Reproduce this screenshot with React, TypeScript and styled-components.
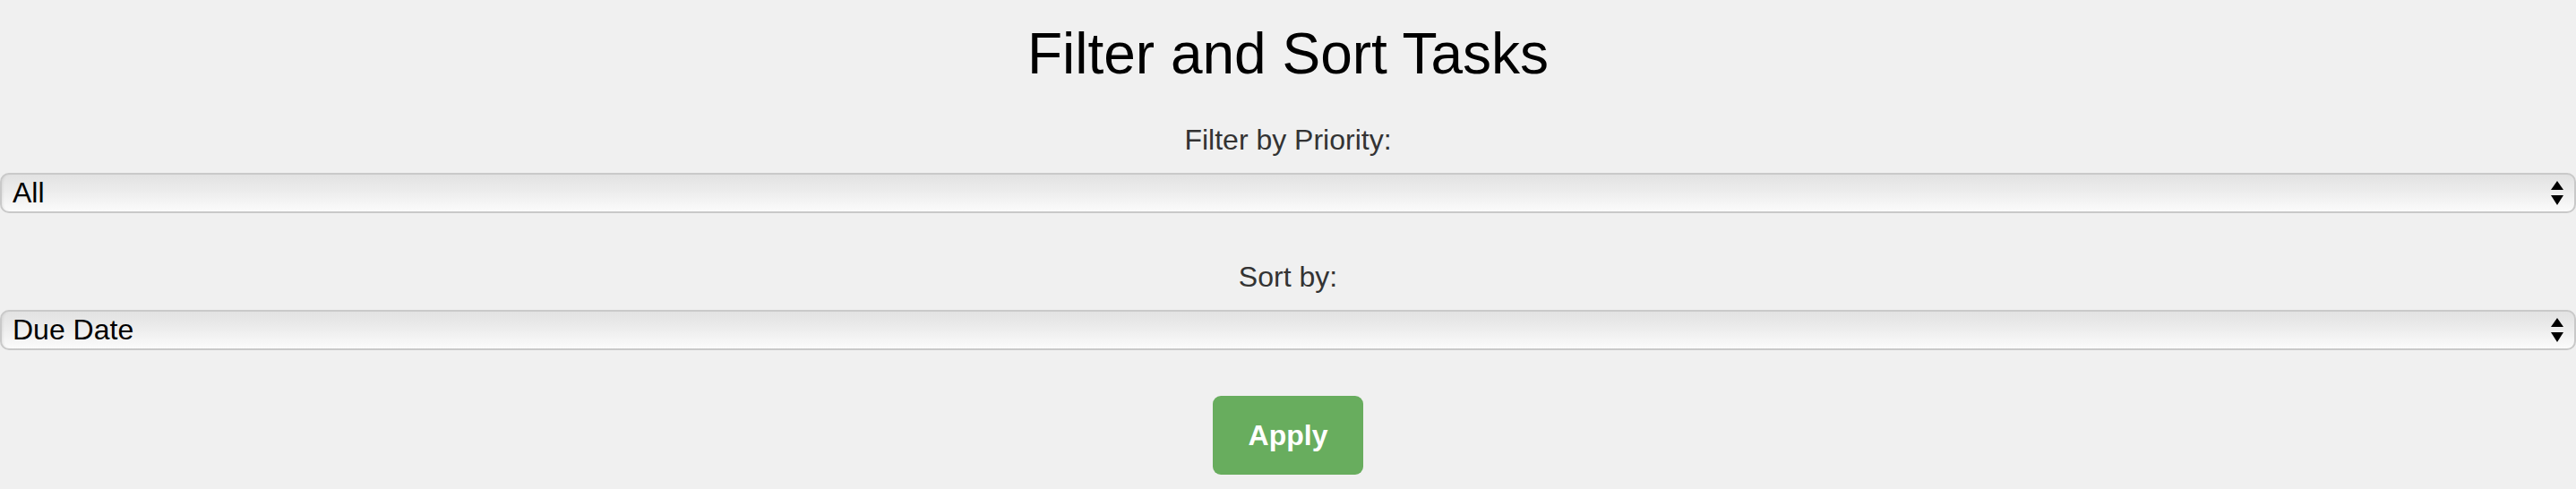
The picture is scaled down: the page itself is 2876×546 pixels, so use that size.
import React, { useState } from "react";
import styled, { createGlobalStyle } from "styled-components";

const GlobalStyle = createGlobalStyle`
  html, body {
    margin: 0;
    padding: 0;
    background: #f0f0f0;
    font-family: "Liberation Sans", Arial, Helvetica, sans-serif;
  }
`;

const Page = styled.div`
  display: flex;
  flex-direction: column;
  align-items: stretch;
  padding-top: 23px;
  min-height: 546px;
  box-sizing: border-box;
`;

const Title = styled.h1`
  margin: 0 0 41px;
  font-size: 64px;
  line-height: 74px;
  font-weight: 400;
  color: #000;
  text-align: center;
`;

const Field = styled.div<{ $gap: number }>`
  display: flex;
  flex-direction: column;
  margin-bottom: ${(p) => p.$gap}px;
`;

const Label = styled.label`
  display: block;
  font-size: 32px;
  line-height: 37px;
  color: #333;
  text-align: center;
  margin-bottom: 18px;
`;

const SelectWrap = styled.div`
  position: relative;
  width: 100%;
`;

const Select = styled.select`
  appearance: none;
  -webkit-appearance: none;
  display: block;
  width: 100%;
  height: 45px;
  box-sizing: border-box;
  margin: 0;
  padding: 0 40px 0 12px;
  border: 2px solid #c9c9c9;
  border-radius: 10px;
  background: linear-gradient(to bottom, #e2e2e2 0%, #ebebeb 40%, #fbfbfb 100%);
  box-shadow: inset 3px 0 3px -2px rgba(0, 0, 0, 0.08);
  font-family: "Liberation Sans", Arial, Helvetica, sans-serif;
  font-size: 32px;
  line-height: 37px;
  color: #000;
  outline: none;
`;

const Arrows = styled.svg`
  position: absolute;
  right: 14px;
  top: 50%;
  transform: translateY(-50%);
  pointer-events: none;
`;

const ButtonRow = styled.div`
  display: flex;
  justify-content: center;
  margin-top: -2px;
`;

const ApplyButton = styled.button`
  width: 168px;
  height: 88px;
  border: none;
  border-radius: 9px;
  background: #68ad5e;
  color: #fff;
  font-family: "Liberation Sans", Arial, Helvetica, sans-serif;
  font-size: 32px;
  font-weight: 700;
  line-height: 37px;
  cursor: pointer;
  padding: 0;
`;

const ArrowIcon = () => (
  <Arrows width="14" height="28" viewBox="0 0 14 28">
    <polygon points="7,0 14,10 0,10" fill="#000" />
    <polygon points="0,16 14,16 7,27" fill="#000" />
  </Arrows>
);

export default function App() {
  const [priority, setPriority] = useState("all");
  const [sort, setSort] = useState("dueDate");
  return (
    <>
      <GlobalStyle />
      <Page>
        <Title>Filter and Sort Tasks</Title>
        <Field $gap={53}>
          <Label htmlFor="priority">Filter by Priority:</Label>
          <SelectWrap>
            <Select id="priority" value={priority} onChange={(e) => setPriority(e.target.value)}>
              <option value="all">All</option>
              <option value="high">High</option>
              <option value="medium">Medium</option>
              <option value="low">Low</option>
            </Select>
            <ArrowIcon />
          </SelectWrap>
        </Field>
        <Field $gap={53}>
          <Label htmlFor="sort">Sort by:</Label>
          <SelectWrap>
            <Select id="sort" value={sort} onChange={(e) => setSort(e.target.value)}>
              <option value="dueDate">Due Date</option>
              <option value="priority">Priority</option>
              <option value="name">Name</option>
            </Select>
            <ArrowIcon />
          </SelectWrap>
        </Field>
        <ButtonRow>
          <ApplyButton>Apply</ApplyButton>
        </ButtonRow>
      </Page>
    </>
  );
}
